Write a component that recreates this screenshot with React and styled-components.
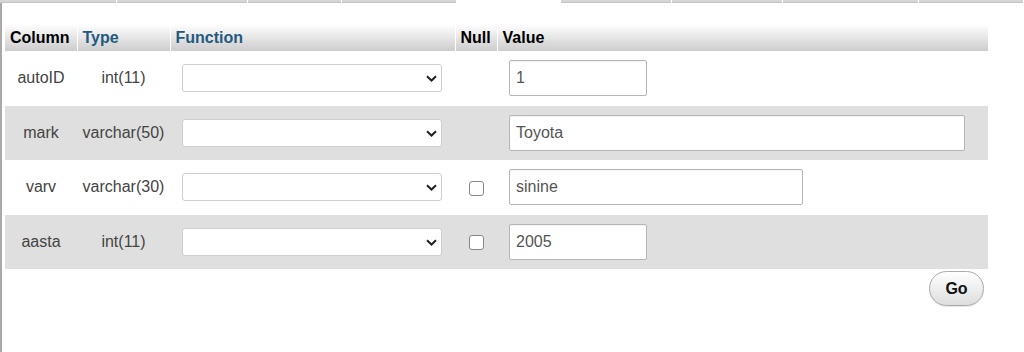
import React from 'react'
import styled, { createGlobalStyle } from 'styled-components'

const GlobalStyle = createGlobalStyle`
  html, body {
    margin: 0;
    padding: 0;
    background: #fff;
  }
  body {
    font-family: "Liberation Sans", Arial, sans-serif;
    font-size: 16px;
    color: #444;
  }
`

const Page = styled.div`
  width: 1024px;
  height: 352px;
  overflow: hidden;
`

const TabStrip = styled.div`
  display: flex;
  height: 3px;
  gap: 1px;
`

const TabBottom = styled.div`
  flex: 0 0 ${p => p.w}px;
  height: 3px;
  background: ${p => (p.active ? '#fff' : '#d6d6d6')};
  border-bottom: ${p => (p.active ? 'none' : '1px solid #c4c4c4')};
  box-sizing: border-box;
`

const Content = styled.div`
  border-left: 2px solid #a9a9a9;
  height: 349px;
  padding: 21px 0 0 3px;
  box-sizing: border-box;
`

const Table = styled.table`
  border-collapse: collapse;
  width: 983px;
  table-layout: fixed;
`

const HeadCell = styled.th`
  background: linear-gradient(#fff, #ccc);
  border-right: 1px solid #fff;
  color: #000;
  font-weight: bold;
  text-align: left;
  height: 27px;
  padding: 0 5px;
  line-height: 18px;
  white-space: nowrap;
  box-sizing: border-box;
  &:last-child {
    border-right: none;
  }
`

const HeadLink = styled.span`
  color: #235a81;
`

const Row = styled.tr`
  background: ${p => (p.even ? '#dfdfdf' : '#fff')};
`

const Cell = styled.td`
  height: 54.5px;
  padding: 0 ${p => p.pad || 0}px;
  text-align: ${p => p.align || 'center'};
  vertical-align: middle;
  color: #444;
  white-space: nowrap;
  box-sizing: border-box;
`

const SelectWrap = styled.span`
  position: relative;
  display: block;
  width: 260px;
  height: 28px;
`

const Select = styled.select`
  appearance: none;
  width: 260px;
  height: 28px;
  border: 1px solid #cfcfcf;
  border-radius: 3px;
  background: #fff;
  display: block;
  font-family: inherit;
  font-size: 14px;
`

const Chevron = styled.svg`
  position: absolute;
  right: 5px;
  top: 11px;
  pointer-events: none;
`

const ValueInput = styled.input`
  box-sizing: border-box;
  width: ${p => p.w}px;
  height: 36px;
  border: 1px solid #b5b5b5;
  border-radius: 2px;
  padding: 0 6px;
  font-family: inherit;
  font-size: 16px;
  color: #555;
  background: #fff;
  display: block;
  box-shadow: inset 0 1px 1px rgba(0, 0, 0, 0.05);
`

const Check = styled.input`
  appearance: none;
  box-sizing: border-box;
  width: 15px;
  height: 15px;
  margin: 0;
  border: 1px solid #888;
  border-radius: 3px;
  background: #fff;
  vertical-align: middle;
`

const Footer = styled.div`
  width: 983px;
  display: flex;
  justify-content: flex-end;
  padding-top: 2px;
`

const GoButton = styled.button`
  margin-right: 4px;
  width: 55px;
  height: 35px;
  border: 1px solid #aaa;
  border-radius: 18px;
  background: linear-gradient(#fff, #ddd);
  font-family: "Liberation Sans", Arial, sans-serif;
  font-size: 16px;
  font-weight: bold;
  color: #111;
  box-shadow: 0 1px 1px rgba(0, 0, 0, 0.1);
`

const tabs = [
  { w: 116 }, { w: 130 }, { w: 93 }, { w: 114 },
  { w: 103, active: true },
  { w: 110 }, { w: 110 }, { w: 135 }, { w: 104 },
]

const rows = [
  { name: 'autoID', type: 'int(11)', nullable: false, value: '1', w: 138 },
  { name: 'mark', type: 'varchar(50)', nullable: false, value: 'Toyota', w: 456 },
  { name: 'varv', type: 'varchar(30)', nullable: true, value: 'sinine', w: 294 },
  { name: 'aasta', type: 'int(11)', nullable: true, value: '2005', w: 138 },
]

const App = () => {
  return (
    <>
      <GlobalStyle />
      <Page>
        <TabStrip>
          {tabs.map((t, i) => (
            <TabBottom key={i} w={t.w} active={t.active} />
          ))}
        </TabStrip>
        <Content>
          <Table>
            <colgroup>
              <col style={{ width: 72 }} />
              <col style={{ width: 93 }} />
              <col style={{ width: 285 }} />
              <col style={{ width: 42 }} />
              <col style={{ width: 491 }} />
            </colgroup>
            <thead>
              <tr>
                <HeadCell>Column</HeadCell>
                <HeadCell><HeadLink>Type</HeadLink></HeadCell>
                <HeadCell><HeadLink>Function</HeadLink></HeadCell>
                <HeadCell>Null</HeadCell>
                <HeadCell>Value</HeadCell>
              </tr>
            </thead>
            <tbody>
              {rows.map((r, i) => (
                <Row key={r.name} even={i % 2 === 1}>
                  <Cell>{r.name}</Cell>
                  <Cell>{r.type}</Cell>
                  <Cell align="left" pad={12}>
                    <SelectWrap>
                      <Select defaultValue="">
                        <option value=""></option>
                      </Select>
                      <Chevron width="11" height="7" viewBox="0 0 11 7">
                        <path d="M1 1.2 L5.5 5.5 L10 1.2" fill="none" stroke="#222" strokeWidth="2" />
                      </Chevron>
                    </SelectWrap>
                  </Cell>
                  <Cell>{r.nullable && <Check type="checkbox" />}</Cell>
                  <Cell align="left" pad={12}>
                    <ValueInput w={r.w} defaultValue={r.value} />
                  </Cell>
                </Row>
              ))}
            </tbody>
          </Table>
          <Footer>
            <GoButton>Go</GoButton>
          </Footer>
        </Content>
      </Page>
    </>
  )
}

export default App
